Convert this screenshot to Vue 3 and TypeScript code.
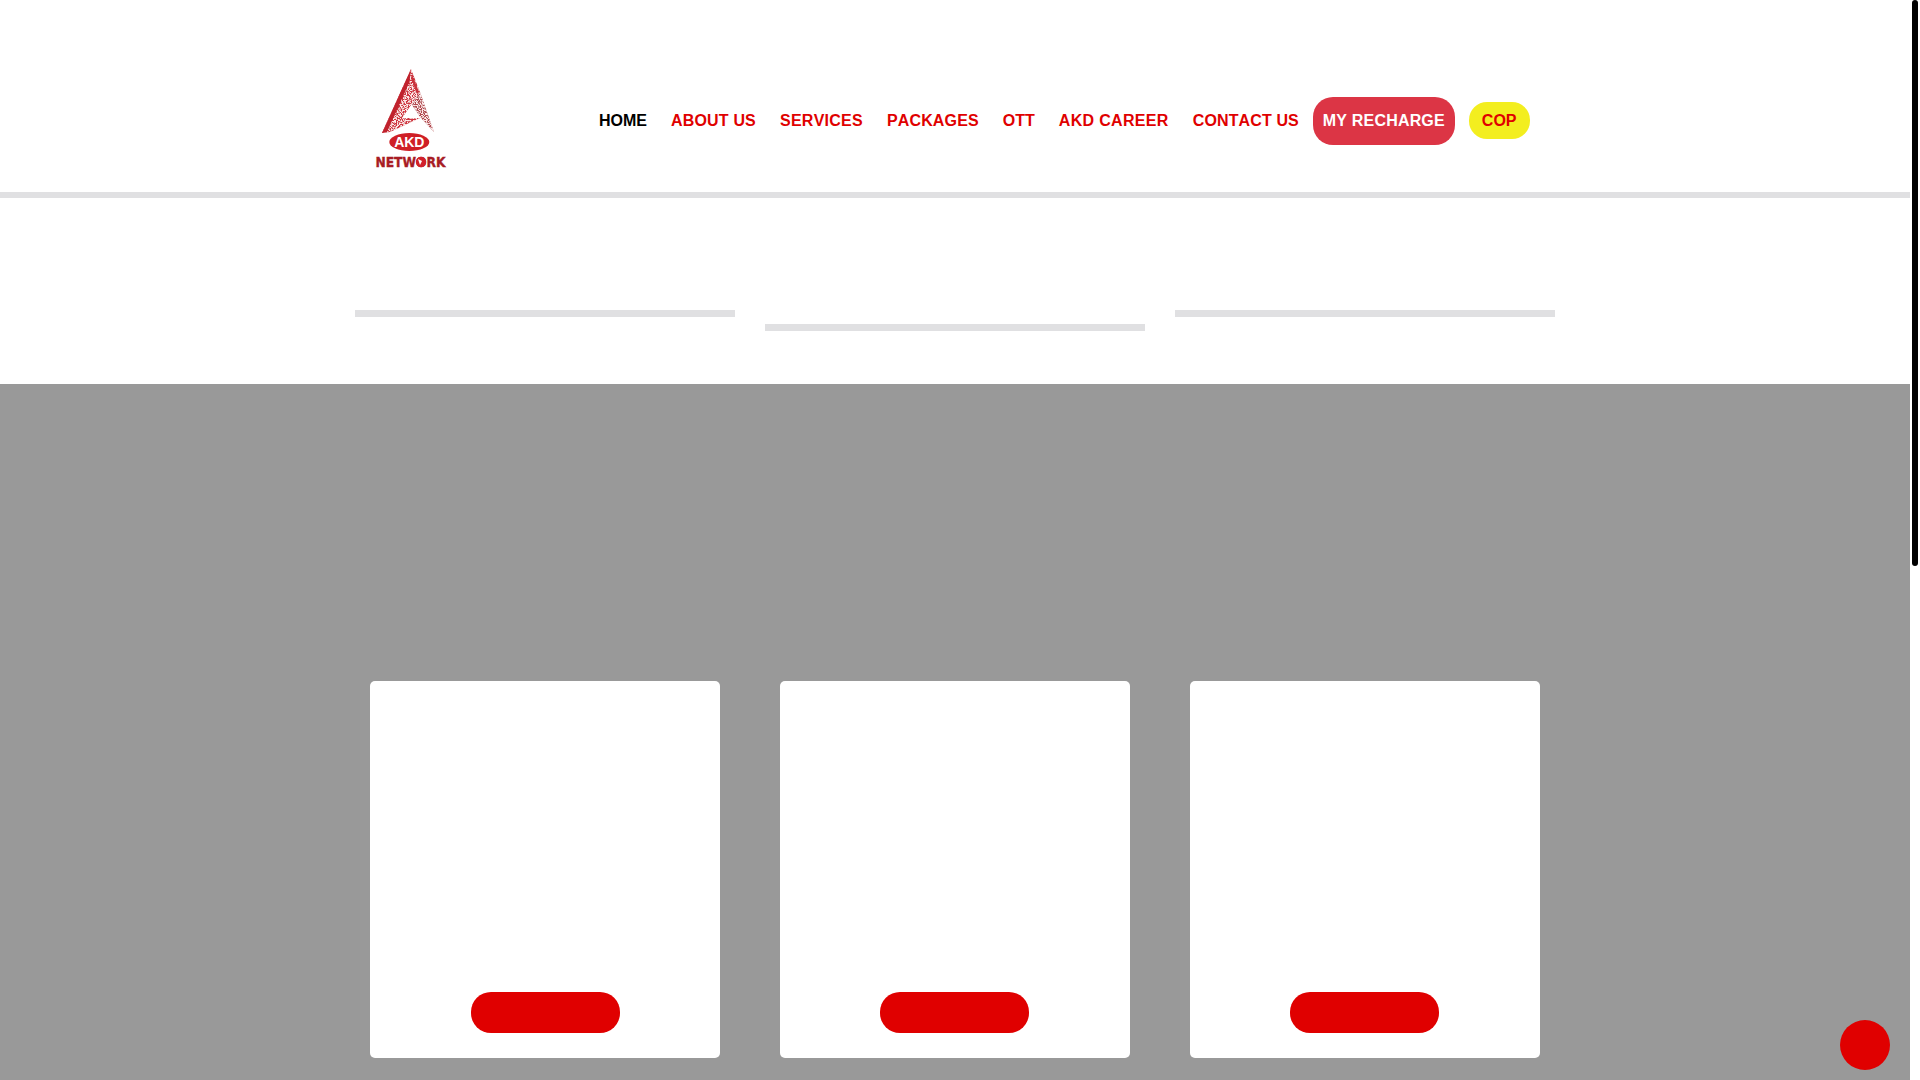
<script setup lang="ts">
interface NavItem {
  label: string
  spacing: number
}
const navItems: NavItem[] = [
  { label: 'ABOUT US', spacing: 0.175 },
  { label: 'SERVICES', spacing: 0.26 },
  { label: 'PACKAGES', spacing: 0.14 },
  { label: 'OTT', spacing: 0 },
  { label: 'AKD CAREER', spacing: 0.33 },
  { label: 'CONTACT US', spacing: 0.12 },
]
const columns: number[] = [1, 2, 3]
</script>

<template>
  <div class="page">
    <header class="header">
      <div class="container header-row">
        <a class="logo" aria-label="AKD Network">
          <svg width="72" height="102" viewBox="0 0 72 102">
            <defs>
              <filter id="speckle" x="0" y="0" width="100%" height="100%">
                <feTurbulence type="fractalNoise" baseFrequency="0.8" numOctaves="2" seed="4" result="n" />
                <feColorMatrix in="n" type="matrix" values="0 0 0 0 1  0 0 0 0 0.82  0 0 0 0 0.82  0 0 0 6 -2.6" result="w" />
                <feComposite in="w" in2="SourceGraphic" operator="in" result="spots" />
                <feMerge result="merged">
                  <feMergeNode in="SourceGraphic" />
                  <feMergeNode in="spots" />
                </feMerge>
                <feGaussianBlur in="merged" stdDeviation="0.35" />
              </filter>
            </defs>
            <path d="M36 1 L45 24 L27 50 L45 50 L15 64 L7 65 Z" fill="#cf3540" filter="url(#speckle)" />
            <path d="M45 24 L59 64 L45 49 L37 37 Z" fill="#b04a50" filter="url(#speckle)" />
            <path d="M36 1 L7 65 L12 64 L34.5 14 Z" fill="#c0222d" />
            <path d="M37 6 L44 24 L42 26 L36 10 Z" fill="#c8323b" />
            <ellipse cx="34.3" cy="74" rx="20" ry="9" fill="#cf1f26" />
            <text x="34.3" y="79" class="logo-akd" text-anchor="middle">AKD</text>
            <text transform="translate(0.4 99) scale(1 1.2)" class="logo-net">NETWORK</text>
            <circle cx="46" cy="94" r="5.2" fill="#d2202a" />
            <path d="M43 91 L47 93 L45 97 Z" fill="#fff" />
          </svg>
        </a>
        <nav class="nav">
          <a class="nav-link active">HOME</a>
          <a
            v-for="item in navItems"
            :key="item.label"
            class="nav-link"
            :style="{ letterSpacing: item.spacing + 'px' }"
          >{{ item.label }}</a>
          <a class="recharge">MY RECHARGE</a>
          <a class="cop">COP</a>
        </nav>
      </div>
    </header>

    <section class="rules container">
      <div v-for="c in columns" :key="c" class="rule-col" :class="{ lower: c === 2 }">
        <div class="rule"></div>
      </div>
    </section>

    <section class="band">
      <div class="container cards">
        <div v-for="c in columns" :key="c" class="card">
          <a class="card-btn"></a>
        </div>
      </div>
    </section>

    <div class="fab"></div>
    <div class="scrollbar"><div class="thumb"></div></div>
  </div>
</template>

<style>
html, body { margin: 0; height: 100%; overflow: hidden; background: #fff; }
</style>

<style scoped>
.page {
  width: 1920px;
  height: 1080px;
  overflow: hidden;
  position: relative;
  font-family: "Liberation Sans", Arial, sans-serif;
  padding-right: 10px;
  box-sizing: border-box;
}
.container { width: 1200px; margin: 0 auto; box-sizing: border-box; }
.header { height: 198px; border-bottom: 6px solid #e0e0e2; box-sizing: border-box; }
.header-row { display: flex; padding-top: 68px; }
.logo { width: 244px; flex: none; padding-left: 20px; box-sizing: border-box; display: block; }
.logo svg { display: block; }
.logo-akd { font: 700 14px "Liberation Sans", Arial, sans-serif; fill: #fff; }
.logo-net { font: 700 12.3px "DejaVu Sans", sans-serif; fill: #a81c24; stroke: #a81c24; stroke-width: 0.35px; }
.nav { display: flex; align-items: center; height: 48px; margin-top: 29px; font-kerning: none; }
.nav-link { font-size: 16px; font-weight: 700; color: #e00000; margin-right: 24px; white-space: nowrap; }
.nav-link.active { color: #000; }
.nav-link:nth-child(7) { margin-right: 14px; }
.recharge {
  font-size: 16px; font-weight: 700; color: #fff; background: #dc3545; letter-spacing: 0.18px;
  height: 48px; line-height: 48px; padding: 0 10px; border-radius: 20px; margin-right: 14px; white-space: nowrap;
}
.cop {
  font-size: 16px; font-weight: 700; color: #e00000; background: #f3ee1f;
  height: 37px; line-height: 37px; padding: 0 13px; border-radius: 18px; white-space: nowrap;
  margin-bottom: 2px;
}
.rules { display: flex; gap: 30px; height: 186px; padding-top: 112px; }
.rule-col { width: 380px; }
.rule-col.lower { padding-top: 14px; }
.rule { height: 7px; background: #e0e0e2; }
.band { height: 696px; background: #999; }
.cards { display: flex; gap: 60px; padding: 297px 15px 0; }
.card {
  width: 350px; height: 377px; background: #fff; border-radius: 5px;
  display: flex; flex-direction: column; align-items: center; justify-content: flex-end;
  padding-bottom: 25px; box-sizing: border-box;
}
.card-btn { display: block; width: 149px; height: 41px; border-radius: 20px; background: #e00000; }
.card:nth-child(n + 2) .card-btn { margin-right: 2px; }
.fab { position: fixed; left: 1840px; top: 1020px; width: 50px; height: 50px; border-radius: 50%; background: #e00000; }
.scrollbar { position: fixed; top: 0; right: 0; width: 10px; height: 1080px; background: #fff; }
.thumb { position: absolute; left: 2px; top: 0; width: 6px; height: 566px; background: #000; border-radius: 3px; }
</style>
